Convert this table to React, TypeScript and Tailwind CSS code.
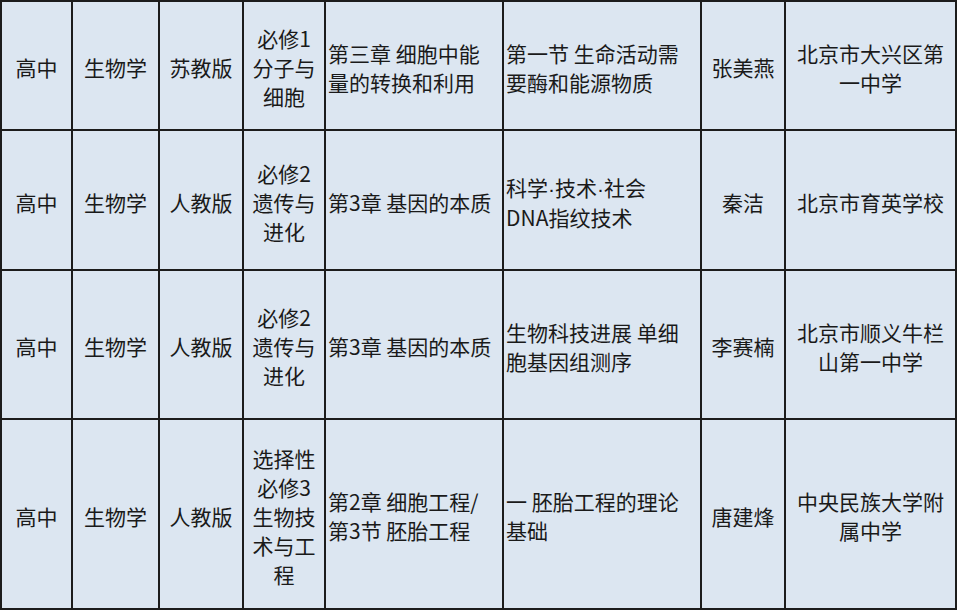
import React from 'react';

type Row = string[][];

// each cell: list of lines
const rows: Row[] = [
  [['高中'], ['生物学'], ['苏教版'], ['必修1', '分子与', '细胞'], ['第三章 细胞中能', '量的转换和利用'], ['第一节 生命活动需', '要酶和能源物质'], ['张美燕'], ['北京市大兴区第', '一中学']],
  [['高中'], ['生物学'], ['人教版'], ['必修2', '遗传与', '进化'], ['第3章 基因的本质'], ['科学·技术·社会', 'DNA指纹技术'], ['秦洁'], ['北京市育英学校']],
  [['高中'], ['生物学'], ['人教版'], ['必修2', '遗传与', '进化'], ['第3章 基因的本质'], ['生物科技进展 单细', '胞基因组测序'], ['李赛楠'], ['北京市顺义牛栏', '山第一中学']],
  [['高中'], ['生物学'], ['人教版'], ['选择性', '必修3', '生物技', '术与工', '程'], ['第2章 细胞工程/', '第3节 胚胎工程'], ['一 胚胎工程的理论', '基础'], ['唐建烽'], ['中央民族大学附', '属中学']],
];

const leftCols = [4, 5];

// the middle dot should stay narrow, not the full-width CJK form
function Line({ text }: { text: string }) {
  const parts = text.split('·');
  return (
    <span>
      {parts.map((p, i) => (
        <React.Fragment key={i}>
          {i > 0 && <span className="font-['Liberation_Sans']">·</span>}
          {p}
        </React.Fragment>
      ))}
    </span>
  );
}

export default function App() {
  return (
    <div className="w-[960px] h-[612px] bg-white" style={{ fontFamily: '"Noto Sans CJK SC", "Noto Sans", sans-serif' }}>
      <div className="grid w-fit grid-cols-[69px_85px_82px_80px_176px_196px_82px_169px] grid-rows-[127px_138px_147px_188px] gap-[2px] p-[2px] bg-[#1c1c1c]">
        {rows.map((row, ri) =>
          row.map((lines, ci) => {
            const left = leftCols.includes(ci);
            return (
              <div
                key={`${ri}-${ci}`}
                className={
                  left
                    ? 'flex flex-col justify-center items-start pl-[2px] pt-[4px] bg-[#dce6f1] text-[21px] leading-[29px] text-[#1a1a1a] whitespace-nowrap'
                    : 'flex flex-col justify-center items-center pt-[4px] bg-[#dce6f1] text-[21px] leading-[29px] text-[#1a1a1a] whitespace-nowrap'
                }
              >
                {lines.map((l, li) => (
                  <Line key={li} text={l} />
                ))}
              </div>
            );
          })
        )}
      </div>
    </div>
  );
}
